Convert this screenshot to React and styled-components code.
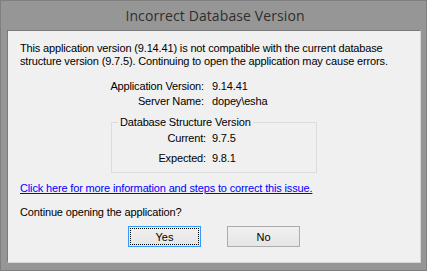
import React from 'react';
import styled, { createGlobalStyle } from 'styled-components';

const GlobalStyle = createGlobalStyle`
  html, body {
    margin: 0;
    padding: 0;
    background: #969696;
  }
`;

const Frame = styled.div`
  box-sizing: border-box;
  width: 427px;
  height: 271px;
  display: flex;
  flex-direction: column;
  background-color: #969696;
  border: 1px solid #7f7f7f;
  padding: 0 5px 7px 6px;
`;

const TitleBar = styled.div`
  height: 29px;
  display: flex;
  align-items: center;
  justify-content: center;
  font-family: 'Open Sans', 'Noto Sans', sans-serif;
  font-size: 14px;
  letter-spacing: 0.1px;
  color: #2e2e2e;
  padding-left: 2px;
`;

const Client = styled.div`
  flex: 1;
  display: flex;
  flex-direction: column;
  background-color: #f0f0f0;
  border-top: 1px solid #7a7a7a;
  border-left: 1px solid #7a7a7a;
  border-right: 1px solid #d4d4d4;
  border-bottom: 1px solid #d4d4d4;
  padding: 11px 0 0 12px;
  font-family: 'Liberation Sans', Arial, sans-serif;
  font-size: 11px;
  letter-spacing: -0.15px;
  color: #000;
`;

const Message = styled.p`
  margin: 0;
  line-height: 13px;
`;

const InfoGrid = styled.div`
  display: grid;
  grid-template-columns: 184px auto;
  column-gap: 8px;
  row-gap: 2px;
  margin-top: 12px;
  line-height: 13px;
`;

const Label = styled.span`
  text-align: right;
`;

const GroupBox = styled.fieldset`
  box-sizing: border-box;
  width: 206px;
  margin: 8px 0 0 91px;
  padding: 3px 0 7px 0;
  border: 1px solid #dcdcdc;
  border-radius: 0;
`;

const Legend = styled.legend`
  padding: 0 2px;
  margin-left: 6px;
  line-height: 13px;
`;

const GroupGrid = styled(InfoGrid)`
  grid-template-columns: 94px auto;
  column-gap: 6px;
  margin-top: 0;
  row-gap: 7px;
`;

const Link = styled.a`
  margin-top: 9px;
  color: #0000ff;
  text-decoration: underline;
  line-height: 13px;
  cursor: pointer;
`;

const Question = styled.p`
  margin: 11px 0 0;
  line-height: 13px;
`;

const ButtonRow = styled.div`
  display: flex;
  gap: 26px;
  margin: 7px 0 0 108px;
`;

const Button = styled.button`
  box-sizing: border-box;
  width: 73px;
  height: 21px;
  padding: 0;
  display: flex;
  align-items: center;
  justify-content: center;
  font-family: 'Liberation Sans', Arial, sans-serif;
  font-size: 11px;
  color: #000;
  background: linear-gradient(#f0f0f0, #e5e5e5);
  border: 1px solid ${(p) => (p.$default ? '#3399ff' : '#acacac')};
  border-radius: 0;
`;

const FocusRing = styled.span`
  box-sizing: border-box;
  flex: 1;
  align-self: stretch;
  margin: 1px;
  display: flex;
  align-items: center;
  justify-content: center;
  border: 1px dotted ${(p) => (p.$show ? '#000' : 'transparent')};
`;

export default function App() {
  return (
    <>
      <GlobalStyle />
      <Frame>
        <TitleBar>Incorrect Database Version</TitleBar>
        <Client>
          <Message>
            This application version (9.14.41) is not compatible with the current database
            <br />
            structure version (9.7.5). Continuing to open the application may cause errors.
          </Message>
          <InfoGrid>
            <Label>Application Version:</Label>
            <span>9.14.41</span>
            <Label>Server Name:</Label>
            <span>dopey\esha</span>
          </InfoGrid>
          <GroupBox>
            <Legend>Database Structure Version</Legend>
            <GroupGrid>
              <Label>Current:</Label>
              <span>9.7.5</span>
              <Label>Expected:</Label>
              <span>9.8.1</span>
            </GroupGrid>
          </GroupBox>
          <Link>Click here for more information and steps to correct this issue.</Link>
          <Question>Continue opening the application?</Question>
          <ButtonRow>
            <Button $default>
              <FocusRing $show>Yes</FocusRing>
            </Button>
            <Button>
              <FocusRing>No</FocusRing>
            </Button>
          </ButtonRow>
        </Client>
      </Frame>
    </>
  );
}
